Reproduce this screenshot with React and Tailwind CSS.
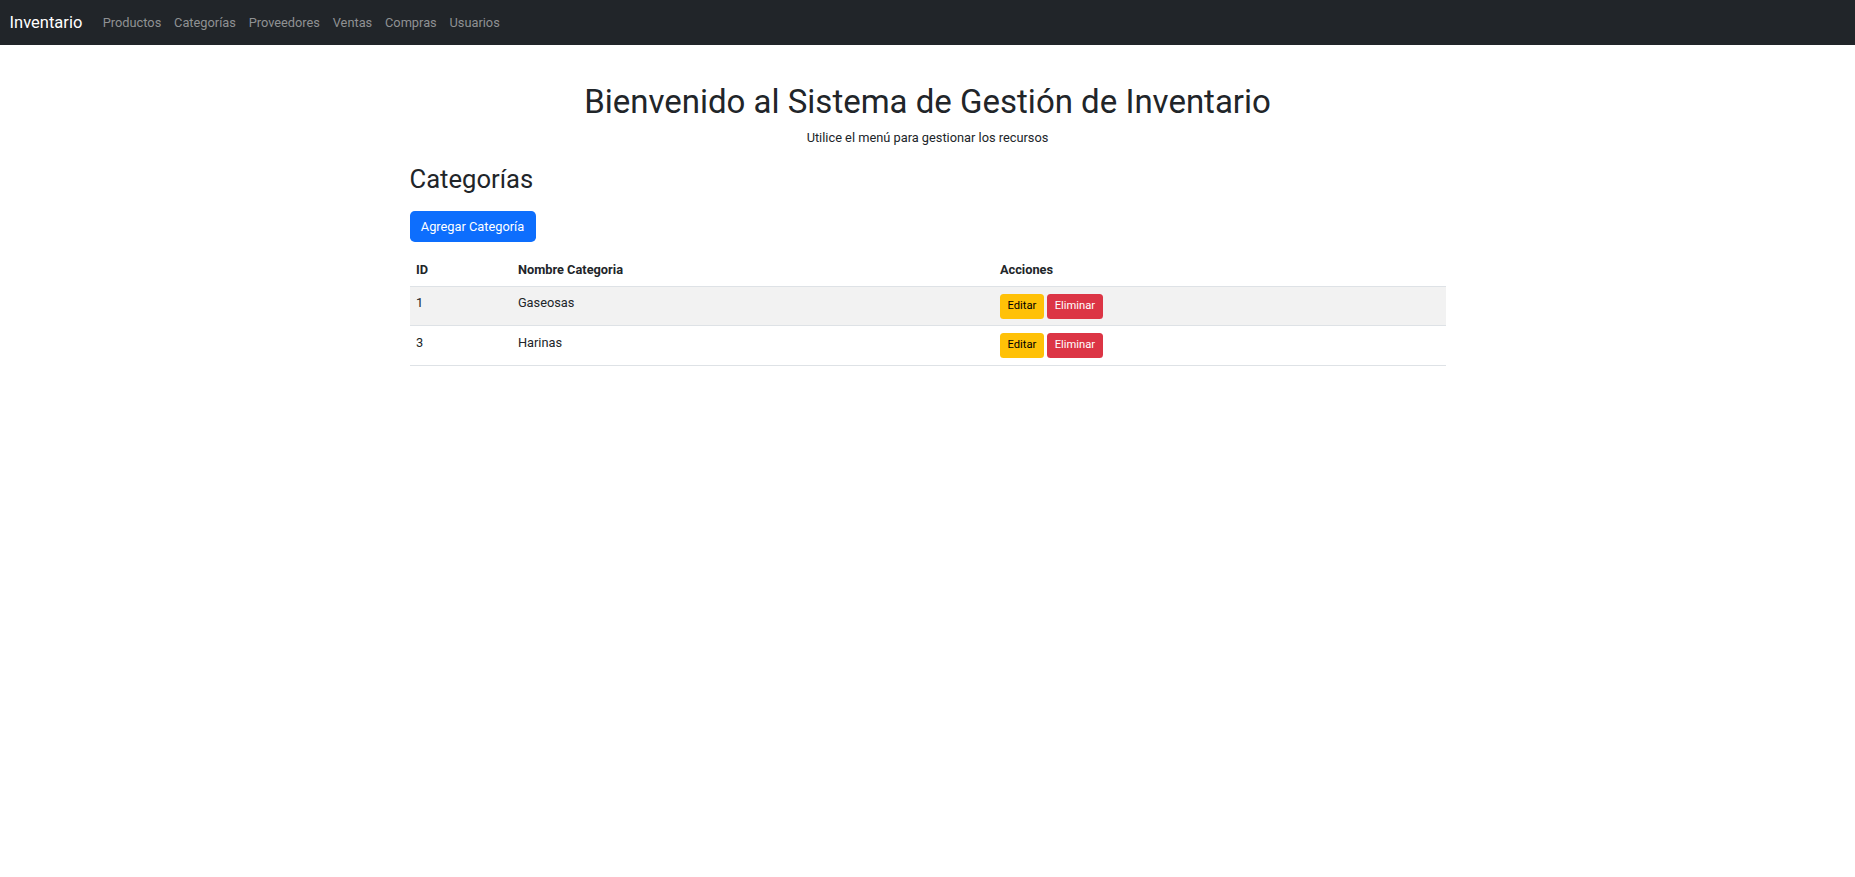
import { useState } from "react";

const links = ["Productos", "Categorías", "Proveedores", "Ventas", "Compras", "Usuarios"];

const initialCategorias = [
  { id: 1, nombre: "Gaseosas" },
  { id: 3, nombre: "Harinas" },
];

function Navbar() {
  return (
    <nav className="h-[45px] bg-[#212529] flex items-center px-[9.6px]">
      <a href="#" className="text-[16.5px] leading-[24px] text-white mr-[14px]">
        Inventario
      </a>
      <ul className="flex items-center">
        {links.map((l) => (
          <li key={l}>
            <a href="#" className="block px-[6.4px] text-[12.8px] leading-[19.2px] text-[#8f9193]">
              {l}
            </a>
          </li>
        ))}
      </ul>
    </nav>
  );
}

function Categorias() {
  const [categorias, setCategorias] = useState(initialCategorias);

  const eliminar = (id) => {
    setCategorias(categorias.filter((c) => c.id !== id));
  };

  return (
    <div>
      <h2 className="mt-[17px] text-[25.6px] leading-[30.7px] text-[#212529]">Categorías</h2>
      <button className="mt-[16.3px] h-[31px] w-[126px] rounded-[4.8px] bg-[#0d6efd] text-white text-[12.8px] leading-[19.2px]">
        Agregar Categoría
      </button>
      <table className="mt-[12px] w-full border-collapse text-[12.8px] leading-[19.2px] text-[#212529]">
        <thead>
          <tr className="border-b border-[#dee2e6]">
            <th className="w-[102px] text-left font-bold align-top px-[6.4px] py-[6.4px]">ID</th>
            <th className="w-[482px] text-left font-bold align-top px-[6.4px] py-[6.4px]">Nombre Categoria</th>
            <th className="text-left font-bold align-top px-[6.4px] py-[6.4px]">Acciones</th>
          </tr>
        </thead>
        <tbody>
          {categorias.map((c, i) => (
            <tr key={c.id} className={`border-b border-[#dee2e6] ${i % 2 === 0 ? "bg-[#f2f2f2]" : "bg-white"}`}>
              <td className="align-top px-[6.4px] py-[6.4px]">{c.id}</td>
              <td className="align-top px-[6.4px] py-[6.4px]">{c.nombre}</td>
              <td className="align-top px-[6.4px] pt-[7px] pb-[6.4px]">
                <div className="flex gap-[3px]">
                  <button className="h-[25px] w-[44px] rounded-[3.5px] bg-[#ffc107] text-black text-[11.2px] leading-[16.8px]">
                    Editar
                  </button>
                  <button
                    onClick={() => eliminar(c.id)}
                    className="h-[25px] w-[56px] rounded-[3.5px] bg-[#dc3545] text-white text-[11.2px] leading-[16.8px]"
                  >
                    Eliminar
                  </button>
                </div>
              </td>
            </tr>
          ))}
        </tbody>
      </table>
    </div>
  );
}

export default function App() {
  return (
    <div className="min-h-screen bg-white font-['Roboto',sans-serif]">
      <Navbar />
      <main className="w-[1036px] mx-auto">
        <div className="text-center">
          <h1 className="mt-[38px] text-[33px] leading-[38.4px] text-[#212529]">
            Bienvenido al Sistema de Gestión de Inventario
          </h1>
          <p className="mt-[6.4px] text-[12.8px] leading-[19.2px] text-[#212529]">
            Utilice el menú para gestionar los recursos
          </p>
        </div>
        <Categorias />
      </main>
    </div>
  );
}
